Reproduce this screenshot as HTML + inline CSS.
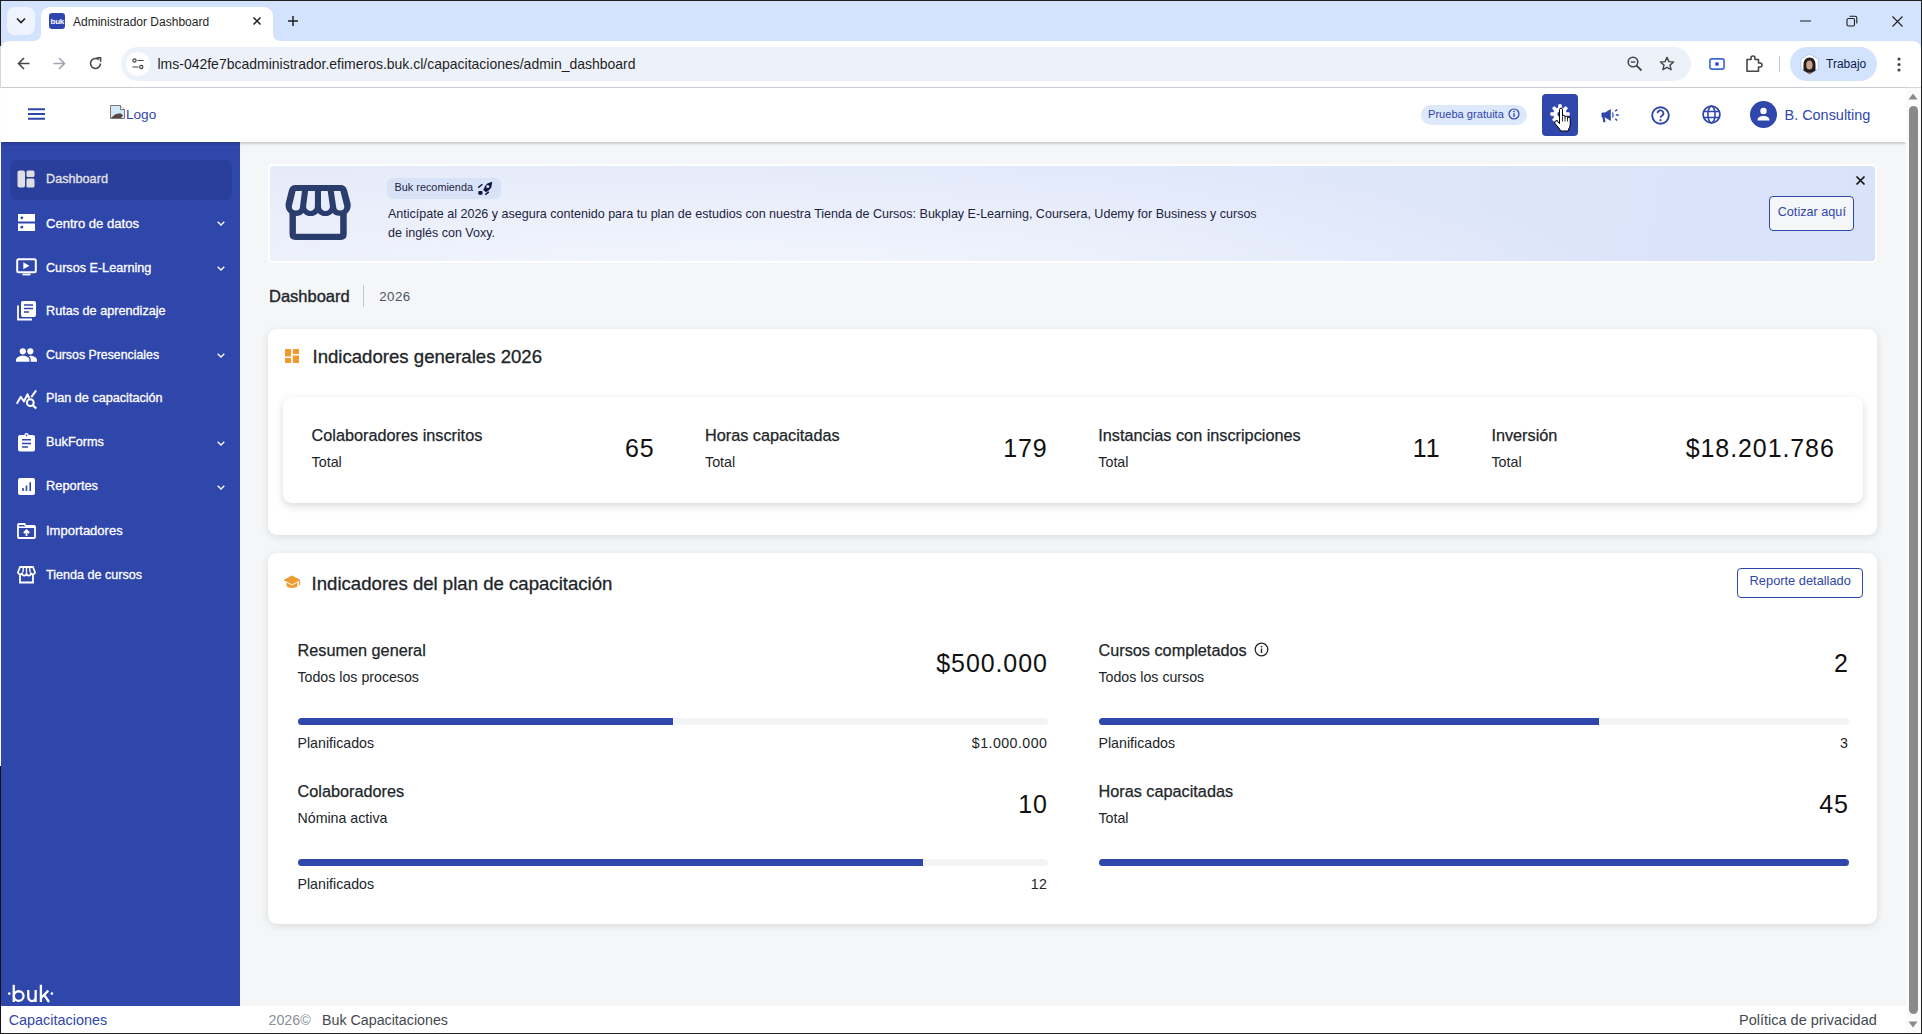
<!DOCTYPE html>
<html><head><meta charset="utf-8">
<style>
*{margin:0;padding:0;box-sizing:border-box}
html,body{width:1922px;height:1034px;overflow:hidden;background:#fff;font-family:"Liberation Sans",sans-serif}
.a{position:absolute}
.t{position:absolute;white-space:nowrap;line-height:1}
svg{position:absolute;overflow:visible}
</style></head><body>
<div class="a" style="left:0px;top:0px;width:1922px;height:50px;background:#d3e3fd;"></div>
<div class="a" style="left:7px;top:7px;width:28px;height:28px;background:#eef3fd;border-radius:8px"></div>
<svg style="left:15px;top:17px" width="12" height="8" viewBox="0 0 12 8"><path d="M2 1.5 L6 5.5 L10 1.5" fill="none" stroke="#1f1f1f" stroke-width="1.6"/></svg>
<div class="a" style="left:41px;top:7px;width:232px;height:35px;background:#fff;border-radius:9px 9px 0 0"></div>
<svg style="left:33px;top:33px" width="8" height="8" viewBox="0 0 8 8"><path d="M0 8 Q8 8 8 0 V8 Z" fill="#fff"/></svg>
<svg style="left:273px;top:33px" width="8" height="8" viewBox="0 0 8 8"><path d="M8 8 Q0 8 0 0 V8 Z" fill="#fff"/></svg>
<div class="a" style="left:49px;top:13px;width:16px;height:16px;background:#2f45b0;border-radius:3px"></div>
<div class="t" style="top:17.73px;font-size:8px;color:#fff;font-weight:bold;letter-spacing:-0.2px;left:50.50px;">buk</div>
<div class="t" style="top:15.84px;font-size:12px;color:#1f1f1f;left:73.00px;">Administrador Dashboard</div>
<svg style="left:253px;top:17px" width="8" height="8" viewBox="0 0 8 8"><path d="M0.5 0.5L7.5 7.5M7.5 0.5L0.5 7.5" stroke="#1f1f1f" stroke-width="1.5"/></svg>
<svg style="left:288px;top:16px" width="10" height="10" viewBox="0 0 10 10"><path d="M5 0V10M0 5H10" stroke="#1f1f1f" stroke-width="1.5"/></svg>
<svg style="left:1800px;top:20px" width="11" height="2" viewBox="0 0 11 2"><path d="M0 1H11" stroke="#1f1f1f" stroke-width="1"/></svg>
<svg style="left:1846px;top:15px" width="12" height="12" viewBox="0 0 12 12"><rect x="1" y="3.5" width="7.5" height="7.5" rx="1.5" fill="none" stroke="#1f1f1f" stroke-width="1.1"/><path d="M3.5 1.2H9A1.8 1.8 0 0 1 10.8 3V8.5" fill="none" stroke="#1f1f1f" stroke-width="1.1"/></svg>
<svg style="left:1892px;top:16px" width="11" height="11" viewBox="0 0 11 11"><path d="M0.5 0.5L10.5 10.5M10.5 0.5L0.5 10.5" stroke="#1f1f1f" stroke-width="1.1"/></svg>
<div class="a" style="left:1px;top:41px;width:1920px;height:46px;background:#fff;border-radius:8px 8px 0 0"></div>
<div class="a" style="left:1px;top:87px;width:1920px;height:1px;background:#d5d8dc;"></div>
<svg style="left:17px;top:57px" width="13" height="13" viewBox="0 0 13 13"><path d="M12.5 6.5H1.5M7 1L1.5 6.5L7 12" fill="none" stroke="#474747" stroke-width="1.6"/></svg>
<svg style="left:53px;top:57px" width="13" height="13" viewBox="0 0 13 13"><path d="M0.5 6.5H11.5M6 1L11.5 6.5L6 12" fill="none" stroke="#a0a4ae" stroke-width="1.6"/></svg>
<svg style="left:89px;top:57px" width="13" height="13" viewBox="0 0 13 13"><path d="M11.5 6.5A5 5 0 1 1 9.8 2.7" fill="none" stroke="#474747" stroke-width="1.6"/><path d="M7.6 0.8H11.6V4.8" fill="none" stroke="#474747" stroke-width="1.6"/></svg>
<div class="a" style="left:121px;top:47px;width:1570px;height:34px;background:#edf2fa;border-radius:17px"></div>
<div class="a" style="left:126px;top:52px;width:24px;height:24px;background:#fff;border-radius:12px"></div>
<svg style="left:132px;top:58px" width="12" height="12" viewBox="0 0 12 12"><circle cx="2.5" cy="2.5" r="1.6" fill="none" stroke="#474747" stroke-width="1.2"/><path d="M5.5 2.5H11.5M0.5 9H6.5" stroke="#474747" stroke-width="1.2"/><circle cx="9.3" cy="9" r="1.6" fill="none" stroke="#474747" stroke-width="1.2"/></svg>
<div class="t" style="top:57.16px;font-size:13.99px;color:#1f1f1f;left:157.50px;">lms-042fe7bcadministrador.efimeros.buk.cl/capacitaciones/admin_dashboard</div>
<svg style="left:1627px;top:56px" width="16" height="16" viewBox="0 0 16 16"><circle cx="6" cy="6" r="4.8" fill="none" stroke="#474747" stroke-width="1.6"/><path d="M3.8 6H8.2" stroke="#474747" stroke-width="1.4"/><path d="M9.6 9.6L14.5 14.5" stroke="#474747" stroke-width="1.8"/></svg>
<svg style="left:1659px;top:56px" width="16" height="16" viewBox="0 0 16 16"><path d="M8 1.3L9.9 5.6L14.6 6L11 9.1L12.1 13.7L8 11.3L3.9 13.7L5 9.1L1.4 6L6.1 5.6Z" fill="none" stroke="#474747" stroke-width="1.4" stroke-linejoin="round"/></svg>
<svg style="left:1709px;top:58px" width="16" height="12" viewBox="0 0 16 12"><rect x="0.9" y="0.9" width="14.2" height="10.2" rx="2" fill="none" stroke="#3a67d8" stroke-width="1.6"/><circle cx="8" cy="6" r="2" fill="#3a56c8"/></svg>
<svg style="left:1745px;top:55px" width="18" height="18" viewBox="0 0 18 18"><path d="M2 4.5H6V3A2 2 0 0 1 10 3V4.5H13.5V8H15A2 2 0 0 1 15 12H13.5V16.2H2Z" fill="none" stroke="#474747" stroke-width="1.6" stroke-linejoin="round"/></svg>
<div class="a" style="left:1779px;top:56px;width:1px;height:16px;background:#c7cdd6;"></div>
<div class="a" style="left:1790px;top:47px;width:87px;height:34px;background:#d3e3fd;border-radius:17px"></div>
<svg style="left:1799px;top:53px" width="21" height="22" viewBox="0 0 21 22"><defs><clipPath id="hx"><path d="M10.6 1L19.3 6V16L10.6 21L1.9 16V6Z"/></clipPath></defs><path d="M10.6 1L19.3 6V16L10.6 21L1.9 16V6Z" fill="#fff" stroke="#8fb3e8" stroke-width="0.6"/><g clip-path="url(#hx)"><path d="M4.5 22V12Q4.5 4.5 10.6 4.5Q16.5 4.5 16.5 12V22Z" fill="#221c1c"/><ellipse cx="10.4" cy="12" rx="3.2" ry="4.6" fill="#caa18c"/><path d="M6 22Q10.6 16.5 15.5 22Z" fill="#b77a6a"/></g></svg>
<div class="t" style="top:58.34px;font-size:12px;color:#0b1d4a;left:1826.00px;">Trabajo</div>
<svg style="left:1897px;top:57px" width="4" height="15" viewBox="0 0 4 15"><circle cx="2" cy="2" r="1.6" fill="#474747"/><circle cx="2" cy="7.5" r="1.6" fill="#474747"/><circle cx="2" cy="13" r="1.6" fill="#474747"/></svg>
<div class="a" style="left:1px;top:142px;width:1905px;height:864px;background:#f5f6f8;"></div>
<div class="a" style="left:1px;top:142px;width:239px;height:864px;background:#2f46ab;"></div>
<div class="a" style="left:10px;top:160px;width:222px;height:40px;background:#2a3f9b;border-radius:8px"></div>
<div class="t" style="top:173.47px;font-size:12.67px;color:#e4e4e7;left:46.00px;-webkit-text-stroke:0.3px #e4e4e7;">Dashboard</div>
<div class="t" style="top:216.64px;font-size:13.07px;color:#fff;left:46.00px;-webkit-text-stroke:0.3px #fff;">Centro de datos</div>
<svg style="left:217px;top:221.4px" width="8" height="5" viewBox="0 0 8 5"><path d="M0.7 0.7L4 4L7.3 0.7" fill="none" stroke="#fff" stroke-width="1.3"/></svg>
<div class="t" style="top:261.51px;font-size:12.63px;color:#fff;left:46.00px;-webkit-text-stroke:0.3px #fff;">Cursos E-Learning</div>
<svg style="left:217px;top:265.9px" width="8" height="5" viewBox="0 0 8 5"><path d="M0.7 0.7L4 4L7.3 0.7" fill="none" stroke="#fff" stroke-width="1.3"/></svg>
<div class="t" style="top:304.98px;font-size:12.66px;color:#fff;left:46.00px;-webkit-text-stroke:0.3px #fff;">Rutas de aprendizaje</div>
<div class="t" style="top:349.05px;font-size:12.34px;color:#fff;left:46.00px;-webkit-text-stroke:0.3px #fff;">Cursos Presenciales</div>
<svg style="left:217px;top:353.2px" width="8" height="5" viewBox="0 0 8 5"><path d="M0.7 0.7L4 4L7.3 0.7" fill="none" stroke="#fff" stroke-width="1.3"/></svg>
<div class="t" style="top:392.49px;font-size:12.65px;color:#fff;left:46.00px;-webkit-text-stroke:0.3px #fff;">Plan de capacitación</div>
<div class="t" style="top:436.44px;font-size:12.71px;color:#fff;left:46.00px;-webkit-text-stroke:0.3px #fff;">BukForms</div>
<svg style="left:217px;top:440.9px" width="8" height="5" viewBox="0 0 8 5"><path d="M0.7 0.7L4 4L7.3 0.7" fill="none" stroke="#fff" stroke-width="1.3"/></svg>
<div class="t" style="top:480.35px;font-size:12.82px;color:#fff;left:46.00px;-webkit-text-stroke:0.3px #fff;">Reportes</div>
<svg style="left:217px;top:484.9px" width="8" height="5" viewBox="0 0 8 5"><path d="M0.7 0.7L4 4L7.3 0.7" fill="none" stroke="#fff" stroke-width="1.3"/></svg>
<div class="t" style="top:524.18px;font-size:13.02px;color:#fff;left:46.00px;-webkit-text-stroke:0.3px #fff;">Importadores</div>
<div class="t" style="top:568.55px;font-size:12.58px;color:#fff;left:46.00px;-webkit-text-stroke:0.3px #fff;">Tienda de cursos</div>
<svg style="left:17px;top:170px" width="18" height="18" viewBox="0 0 18 18"><rect x="0.5" y="0.5" width="7.5" height="17" rx="2" fill="#dedfe3"/><rect x="9.5" y="0.5" width="8" height="6.5" rx="1.5" fill="#dedfe3"/><rect x="9.5" y="8.5" width="8" height="9" rx="1.5" fill="#dedfe3"/></svg>
<svg style="left:18px;top:214px" width="17" height="17" viewBox="0 0 17 17"><rect x="0" y="0" width="17" height="7.5" fill="#fff"/><rect x="0" y="9.5" width="17" height="7.5" fill="#fff"/><circle cx="3.8" cy="3.8" r="1.4" fill="#2f46ab"/><circle cx="3.8" cy="13.2" r="1.4" fill="#2f46ab"/></svg>
<svg style="left:16px;top:258px" width="21" height="18" viewBox="0 0 21 18"><rect x="1.2" y="1.2" width="18.6" height="13" rx="1.5" fill="none" stroke="#fff" stroke-width="2"/><path d="M7.3 4.2V11.2L13.5 7.7Z" fill="#fff"/><rect x="6.5" y="15.6" width="8" height="1.8" fill="#fff"/></svg>
<svg style="left:17px;top:301px" width="20" height="20" viewBox="0 0 20 20"><path d="M1 4.5V18.5H15" fill="none" stroke="#fff" stroke-width="1.8"/><rect x="4" y="0" width="15" height="16" rx="2" fill="#fff"/><path d="M7 4H16M7 7.5H16M7 11H12" stroke="#2f46ab" stroke-width="1.3"/></svg>
<svg style="left:16px;top:348px" width="22" height="14" viewBox="0 0 22 14"><circle cx="6.8" cy="3.3" r="3.1" fill="#fff"/><circle cx="14.3" cy="3.3" r="3.1" fill="#fff"/><path d="M0 13.8V12.3C0 9.3 3.5 7.8 6.8 7.8S13.5 9.3 13.5 12.3V13.8Z" fill="#fff"/><path d="M14.8 13.8V12.3C14.8 10.5 14 9.2 12.8 8.2C13.3 8 13.8 7.8 14.3 7.8C17.5 7.8 21 9.3 21 12.3V13.8Z" fill="#fff"/></svg>
<svg style="left:16px;top:389px" width="22" height="21" viewBox="0 0 22 21"><path d="M0.8 14.7L4.8 7.8L7.9 12.5L11.5 5.2L13.3 9.5" fill="none" stroke="#fff" stroke-width="2" stroke-linejoin="round"/><path d="M15.3 8.2L20.2 1.3" stroke="#fff" stroke-width="2"/><circle cx="14.3" cy="13.7" r="3.4" fill="none" stroke="#fff" stroke-width="2"/><path d="M16.9 16.4L20.3 19.5" stroke="#fff" stroke-width="2.2"/></svg>
<svg style="left:18px;top:433px" width="17" height="19" viewBox="0 0 17 19"><rect x="0" y="2" width="17" height="16.5" rx="2" fill="#fff"/><circle cx="8.5" cy="2.2" r="2.2" fill="#fff"/><circle cx="8.5" cy="2.4" r="0.8" fill="#2f46ab"/><path d="M4 6.8H13M4 10.5H13M4 14H10" stroke="#2f46ab" stroke-width="1.4"/></svg>
<svg style="left:18px;top:478px" width="17" height="17" viewBox="0 0 17 17"><rect x="0" y="0" width="17" height="17" rx="2" fill="#fff"/><path d="M5 10V13M8.5 7.5V13M12.2 4.2V13" stroke="#2f46ab" stroke-width="1.6"/></svg>
<svg style="left:17px;top:523px" width="19" height="16" viewBox="0 0 19 16"><path d="M1 2A1 1 0 0 1 2 1H7.5L9 3H17.5A0.8 0.8 0 0 1 18 3.8V14.5A0.8 0.8 0 0 1 17.2 15H1.8A0.8 0.8 0 0 1 1 14.2Z" fill="none" stroke="#fff" stroke-width="1.8"/><path d="M1 4.2H18" stroke="#fff" stroke-width="1.6"/><path d="M9.5 13V8M6.8 10L9.5 7.3L12.2 10" fill="none" stroke="#fff" stroke-width="1.8"/></svg>
<svg style="left:17px;top:566px" width="19" height="18" viewBox="0 0 19 18"><path d="M3 1H16L18 6.3A2.2 2.2 0 0 1 14 7.3A2.2 2.2 0 0 1 9.5 7.3A2.2 2.2 0 0 1 5 7.3A2.2 2.2 0 0 1 1 6.3Z" fill="none" stroke="#fff" stroke-width="1.8" stroke-linejoin="round"/><path d="M6.5 1L5.8 6.5M9.5 1V6.5M12.5 1L13.2 6.5" stroke="#fff" stroke-width="1.4"/><path d="M3 8.5V16.5H16V8.5" fill="none" stroke="#fff" stroke-width="1.8"/></svg>
<svg style="left:0px;top:975px" width="60" height="35" viewBox="0 0 60 35"><circle cx="9.3" cy="18.6" r="1.3" fill="#fff"/><circle cx="51.9" cy="18.6" r="1.3" fill="#fff"/><g fill="none" stroke="#fff" stroke-width="2.3"><path d="M13.75 9.8V27"/><circle cx="18.7" cy="21.1" r="4.85"/><path d="M28.25 14.9V21.5A3.7 4.6 0 0 0 35.65 21.5V14.9M35.65 14.9V27"/><path d="M40.9 9.8V27M41.5 22.5L48.3 15.6M44.2 19.8L49 27"/></g></svg>
<div class="a" style="left:1px;top:88px;width:1905px;height:54px;background:#fff;box-shadow:0 1px 3px rgba(0,0,0,.28)"></div>
<svg style="left:28px;top:108px" width="17" height="12" viewBox="0 0 17 12"><path d="M0 1.3H17M0 6H17M0 10.7H17" stroke="#2f46ab" stroke-width="2"/></svg>
<svg style="left:110px;top:105px" width="15" height="14" viewBox="0 0 15 14"><path d="M0.5 0.5H10.5L14.5 4.5V13.5H0.5Z" fill="#d4e9f7" stroke="#777" stroke-width="1"/><path d="M1 13L5 9.5Q8 8 11 8.5L13 10.5L11 13Z" fill="#5a4740"/><path d="M10.5 0.5V4.5H14.5" fill="#fff" stroke="#777" stroke-width="1"/></svg>
<div class="t" style="top:108.49px;font-size:13.6px;color:#2f46ab;left:126.00px;">Logo</div>
<div class="a" style="left:1421px;top:105px;width:106px;height:20px;background:#dde8fa;border-radius:10px"></div>
<div class="t" style="top:108.90px;font-size:11.1px;color:#2f46ab;left:1428.00px;">Prueba gratuita</div>
<svg style="left:1508px;top:108px" width="12" height="12" viewBox="0 0 12 12"><circle cx="6" cy="6" r="5" fill="none" stroke="#2f46ab" stroke-width="1.2"/><circle cx="6" cy="3.6" r="0.8" fill="#2f46ab"/><path d="M6 5.3V9" stroke="#2f46ab" stroke-width="1.3"/></svg>
<div class="a" style="left:1542px;top:94px;width:36px;height:42px;background:#2f46ab;border-radius:4px"></div>
<svg style="left:1550px;top:104px" width="20" height="20" viewBox="0 0 20 20"><rect x="8.2" y="0.3" width="3.6" height="4" rx="0.8" fill="#fff" transform="rotate(0 10 10)"/><rect x="8.2" y="0.3" width="3.6" height="4" rx="0.8" fill="#fff" transform="rotate(45 10 10)"/><rect x="8.2" y="0.3" width="3.6" height="4" rx="0.8" fill="#fff" transform="rotate(90 10 10)"/><rect x="8.2" y="0.3" width="3.6" height="4" rx="0.8" fill="#fff" transform="rotate(135 10 10)"/><rect x="8.2" y="0.3" width="3.6" height="4" rx="0.8" fill="#fff" transform="rotate(180 10 10)"/><rect x="8.2" y="0.3" width="3.6" height="4" rx="0.8" fill="#fff" transform="rotate(225 10 10)"/><rect x="8.2" y="0.3" width="3.6" height="4" rx="0.8" fill="#fff" transform="rotate(270 10 10)"/><rect x="8.2" y="0.3" width="3.6" height="4" rx="0.8" fill="#fff" transform="rotate(315 10 10)"/><circle cx="10" cy="10" r="6.8" fill="#fff"/><circle cx="10" cy="10" r="2.6" fill="#2f46ab"/></svg>
<svg style="left:1553.5px;top:107.5px" width="18" height="24" viewBox="0 0 18 24"><path d="M5.5 1.6Q5.5 0.2 7 0.2Q8.5 0.2 8.5 1.6V8.2Q8.5 7.2 9.8 7.2Q11 7.2 11 8.6V9.2Q11 8.2 12.3 8.2Q13.5 8.2 13.5 9.6V10.2Q13.5 9.2 14.8 9.2Q16.2 9.2 16.2 10.7V16.2Q16.2 19.2 14.7 21L14.2 23H6.6L5.6 21L1.1 15.6Q0.2 14.2 1.2 13.2Q2.2 12.3 3.6 13.6L5.5 15.6Z" fill="#fff" stroke="#000" stroke-width="1" stroke-linejoin="round"/><path d="M8.5 8.5V13.5M11 9V13.5M13.5 10V13.5" stroke="#000" stroke-width="0.8"/></svg>
<svg style="left:1601px;top:108px" width="19" height="15" viewBox="0 0 19 15"><path d="M0.5 5.5A1 1 0 0 1 1.5 4.5H4L9.8 1V13L4 9.5H3.7L4.5 14.3H2.3L1.5 9.5A1 1 0 0 1 0.5 8.5Z" fill="#2f46ab"/><path d="M11.6 4.5Q12.6 7 11.6 9.5" fill="none" stroke="#2f46ab" stroke-width="1.2"/><path d="M14.2 3.2L16.2 1.5M14.8 7H17.8M14.2 10.8L16.2 12.5" stroke="#2f46ab" stroke-width="1.5"/></svg>
<svg style="left:1651px;top:106px" width="19" height="19" viewBox="0 0 19 19"><circle cx="9.5" cy="9.5" r="8.3" fill="none" stroke="#2f46ab" stroke-width="1.9"/><path d="M6.6 7.3A2.9 2.9 0 1 1 10.8 9.8C10 10.3 9.5 10.8 9.5 11.8" fill="none" stroke="#2f46ab" stroke-width="1.8"/><circle cx="9.5" cy="14.2" r="1.1" fill="#2f46ab"/></svg>
<svg style="left:1702px;top:105px" width="19" height="19" viewBox="0 0 19 19"><circle cx="9.5" cy="9.5" r="8.4" fill="none" stroke="#2f46ab" stroke-width="1.8"/><ellipse cx="9.5" cy="9.5" rx="3.6" ry="8.4" fill="none" stroke="#2f46ab" stroke-width="1.6"/><path d="M1.3 6.5H17.7M1.3 12.5H17.7" stroke="#2f46ab" stroke-width="1.6"/></svg>
<svg style="left:1750px;top:101px" width="27" height="27" viewBox="0 0 27 27"><circle cx="13.5" cy="13.5" r="13.5" fill="#2f46ab"/><circle cx="13.5" cy="10" r="3.2" fill="#fff"/><path d="M7.5 19.5C7.5 16 10.5 15 13.5 15S19.5 16 19.5 19.5Z" fill="#fff"/></svg>
<div class="t" style="top:107.97px;font-size:14.45px;color:#2f46ab;left:1784.50px;">B. Consulting</div>
<div class="a" style="left:1906px;top:88px;width:15px;height:945px;background:#fbfbfb;"></div>
<svg style="left:1908px;top:93px" width="10" height="7" viewBox="0 0 10 7"><path d="M5 0.5L9.5 6.5H0.5Z" fill="#8a8a8a"/></svg>
<div class="a" style="left:1909px;top:106px;width:9px;height:908px;background:#8a8a8a;border-radius:4.5px"></div>
<svg style="left:1908px;top:1021px" width="10" height="7" viewBox="0 0 10 7"><path d="M5 6.5L9.5 0.5H0.5Z" fill="#8a8a8a"/></svg>
<div class="a" style="left:1px;top:1006px;width:1905px;height:27px;background:#fff;"></div>
<div class="t" style="top:1012.81px;font-size:14.4px;color:#2f46ab;left:8.70px;">Capacitaciones</div>
<div class="t" style="top:1012.74px;font-size:14.25px;color:#8b8f96;left:268.50px;">2026©</div>
<div class="t" style="top:1012.74px;font-size:14.25px;color:#444950;left:322.00px;">Buk Capacitaciones</div>
<div class="t" style="top:1012.93px;font-size:14.5px;color:#444950;right:45.20px;">Política de privacidad</div>
<div class="a" style="left:268px;top:164px;width:1609px;height:99px;background:radial-gradient(ellipse 55% 130% at 30% 115%,rgba(255,255,255,.6),rgba(255,255,255,0)),linear-gradient(100deg,#e6ebfa 0%,#e1e8fa 55%,#d8e2f9 100%);border:2px solid #fff;border-radius:5px"></div>
<svg style="left:280px;top:178px" width="80" height="70" viewBox="0 0 80 70"><path fill-rule="evenodd" fill="#2a3d6c" d="M15.6 7.1L60.5 7.1Q65.5 7.1 67 12L70.6 25.5Q71.5 31.5 67 35.5Q62 38.5 57 37.5Q54.5 37 52.8 34.9Q50 38 45.3 38Q40.6 38 37.9 34.9Q35.2 38 30.5 38Q25.8 38 23.4 34.9Q21 37.5 18.5 37.8Q13 38.5 9.5 35.5Q4.8 31.5 5.6 25.5L9 12Q10.5 7.1 15.6 7.1Z M15.6 12.9L22 12.9L20 28.5A4.1 4.1 0 0 1 11.8 28.5Z M28.1 12.9L34.9 12.9L34.9 28.5A4.4 4.4 0 0 1 26.1 28.5Z M41 12.9L47.7 12.9L49.9 28.5A4.45 4.45 0 0 1 41 28.5Z M53.8 12.9L60.4 12.9L64.3 28.5A4.1 4.1 0 0 1 56.1 28.5Z"/><path fill="#2a3d6c" d="M9.5 33V56Q9.5 61.9 15.5 61.9H60.7Q66.7 61.9 66.7 56V33H60.2V55.8H15.9V33Z"/></svg>
<div class="a" style="left:387px;top:178px;width:114px;height:21px;background:#d9e3f8;border-radius:6px"></div>
<div class="t" style="top:181.62px;font-size:10.85px;color:#1c2340;left:394.60px;">Buk recomienda</div>
<svg style="left:476px;top:180px" width="18" height="18" viewBox="0 0 18 18"><path d="M16.3 1.8L15.3 7.2Q13.5 10.5 10 12.3L7.2 10Q8.5 6 11.3 3.6Z" fill="#0d1440"/><circle cx="11.8" cy="6.6" r="1.5" fill="#dbe3f8"/><path d="M2.2 7.6L6.4 4.3" stroke="#0d1440" stroke-width="1.4"/><rect x="2.3" y="11" width="4.2" height="3.8" rx="1" fill="#0d1440"/><path d="M9.3 14.6L12.8 11.8" stroke="#0d1440" stroke-width="1.5"/></svg>
<div class="t" style="top:208.38px;font-size:12.54px;color:#1c2340;left:388.00px;">Anticípate al 2026 y asegura contenido para tu plan de estudios con nuestra Tienda de Cursos: Bukplay E-Learning, Coursera, Udemy for Business y cursos</div>
<div class="t" style="top:226.98px;font-size:12.54px;color:#1c2340;left:388.00px;">de inglés con Voxy.</div>
<svg style="left:1856px;top:176px" width="9" height="9" viewBox="0 0 9 9"><path d="M0.5 0.5L8.5 8.5M8.5 0.5L0.5 8.5" stroke="#111" stroke-width="1.7"/></svg>
<div class="a" style="left:1769px;top:196px;width:85px;height:35px;background:#f5f6f8;border:1.3px solid #2f46ab;border-radius:4px"></div>
<div class="t" style="top:205.97px;font-size:12.67px;color:#2f46ab;left:1777.70px;">Cotizar aquí</div>
<div class="t" style="top:287.53px;font-size:16.5px;color:#212529;left:269.00px;-webkit-text-stroke:0.35px #212529;">Dashboard</div>
<div class="a" style="left:363px;top:285px;width:1px;height:22px;background:#c4c8cf;"></div>
<div class="t" style="top:289.54px;font-size:13.3px;color:#4b5563;letter-spacing:0.5px;left:379.20px;">2026</div>
<div class="a" style="left:268px;top:329px;width:1609px;height:206px;background:#fff;border-radius:9px;box-shadow:0 2px 9px rgba(0,0,0,.11)"></div>
<svg style="left:285px;top:349px" width="14" height="14" viewBox="0 0 14 14"><rect x="0" y="0" width="6" height="7.5" fill="#f09b30"/><rect x="0" y="9" width="6" height="5" fill="#f09b30"/><rect x="7.8" y="0" width="6.2" height="5" fill="#f09b30"/><rect x="7.8" y="6.5" width="6.2" height="7.5" fill="#f09b30"/></svg>
<div class="t" style="top:347.76px;font-size:18.6px;color:#212529;left:312.50px;-webkit-text-stroke:0.3px #212529;">Indicadores generales 2026</div>
<div class="a" style="left:283px;top:397px;width:1580px;height:106px;background:#fff;border-radius:9px;box-shadow:0 3px 8px rgba(0,0,0,.15)"></div>
<div class="t" style="top:426.74px;font-size:16.25px;color:#212529;left:311.60px;-webkit-text-stroke:0.25px #212529;">Colaboradores inscritos</div>
<div class="t" style="top:454.90px;font-size:14.3px;color:#212529;left:311.60px;">Total</div>
<div class="t" style="top:435.84px;font-size:25px;color:#111;letter-spacing:0.9px;right:1268.40px;margin-right:-0.9px;">65</div>
<div class="t" style="top:426.74px;font-size:16.25px;color:#212529;left:705.00px;-webkit-text-stroke:0.25px #212529;">Horas capacitadas</div>
<div class="t" style="top:454.90px;font-size:14.3px;color:#212529;left:705.00px;">Total</div>
<div class="t" style="top:435.84px;font-size:25px;color:#111;letter-spacing:0.9px;right:875.30px;margin-right:-0.9px;">179</div>
<div class="t" style="top:426.74px;font-size:16.25px;color:#212529;left:1098.30px;-webkit-text-stroke:0.25px #212529;">Instancias con inscripciones</div>
<div class="t" style="top:454.90px;font-size:14.3px;color:#212529;left:1098.30px;">Total</div>
<div class="t" style="top:435.84px;font-size:25px;color:#111;letter-spacing:0.9px;right:482.40px;margin-right:-0.9px;">11</div>
<div class="t" style="top:426.74px;font-size:16.25px;color:#212529;left:1491.40px;-webkit-text-stroke:0.25px #212529;">Inversión</div>
<div class="t" style="top:454.90px;font-size:14.3px;color:#212529;left:1491.40px;">Total</div>
<div class="t" style="top:435.84px;font-size:25px;color:#111;letter-spacing:0.9px;right:88.20px;margin-right:-0.9px;">$18.201.786</div>
<div class="a" style="left:268px;top:553px;width:1609px;height:371px;background:#fff;border-radius:9px;box-shadow:0 2px 9px rgba(0,0,0,.11)"></div>
<svg style="left:283px;top:575px" width="18" height="15" viewBox="0 0 18 15"><path d="M9 0.5L17.5 5L9 9.5L0.5 5Z" fill="#f09b30"/><path d="M3.5 7.5V11C5 13.5 13 13.5 14.5 11V7.5L9 10.5Z" fill="#f09b30"/><path d="M16.5 5.5V10" stroke="#f09b30" stroke-width="1.2"/></svg>
<div class="t" style="top:575.06px;font-size:18.6px;color:#212529;left:311.60px;-webkit-text-stroke:0.3px #212529;">Indicadores del plan de capacitación</div>
<div class="a" style="left:1737px;top:568px;width:126px;height:30px;background:#fff;border:1.3px solid #2f46ab;border-radius:4px"></div>
<div class="t" style="top:575.13px;font-size:12.84px;color:#2f46ab;left:1749.60px;">Reporte detallado</div>
<div class="t" style="top:642.04px;font-size:16.25px;color:#212529;left:297.50px;-webkit-text-stroke:0.25px #212529;">Resumen general</div>
<div class="t" style="top:669.98px;font-size:14.2px;color:#212529;left:297.50px;">Todos los procesos</div>
<div class="t" style="top:651.04px;font-size:25px;color:#111;letter-spacing:0.9px;right:875.10px;margin-right:-0.9px;">$500.000</div>
<div class="a" style="left:297.5px;top:718px;width:750px;height:7px;background:#f3f4f6;border-radius:4px"></div>
<div class="a" style="left:297.5px;top:718px;width:375.0px;height:7px;background:#2f46ab;border-radius:4px 0 0 4px"></div>
<div class="t" style="top:735.58px;font-size:14.2px;color:#212529;left:297.50px;">Planificados</div>
<div class="t" style="top:735.58px;font-size:14.2px;color:#212529;letter-spacing:0.45px;right:875.10px;margin-right:-0.45px;">$1.000.000</div>
<div class="t" style="top:642.04px;font-size:16.25px;color:#212529;left:1098.50px;-webkit-text-stroke:0.25px #212529;">Cursos completados</div>
<div class="t" style="top:669.98px;font-size:14.2px;color:#212529;left:1098.50px;">Todos los cursos</div>
<div class="t" style="top:651.04px;font-size:25px;color:#111;letter-spacing:0.9px;right:74.10px;margin-right:-0.9px;">2</div>
<div class="a" style="left:1098.5px;top:718px;width:750px;height:7px;background:#f3f4f6;border-radius:4px"></div>
<div class="a" style="left:1098.5px;top:718px;width:500.0px;height:7px;background:#2f46ab;border-radius:4px 0 0 4px"></div>
<div class="t" style="top:735.58px;font-size:14.2px;color:#212529;left:1098.50px;">Planificados</div>
<div class="t" style="top:735.58px;font-size:14.2px;color:#212529;letter-spacing:0.45px;right:74.10px;margin-right:-0.45px;">3</div>
<svg style="left:1254px;top:642px" width="15" height="15" viewBox="0 0 15 15"><circle cx="7.5" cy="7.5" r="6.3" fill="none" stroke="#212529" stroke-width="1.3"/><circle cx="7.5" cy="4.6" r="0.9" fill="#212529"/><path d="M7.5 6.5V11" stroke="#212529" stroke-width="1.4"/></svg>
<div class="t" style="top:783.24px;font-size:16.25px;color:#212529;left:297.50px;-webkit-text-stroke:0.25px #212529;">Colaboradores</div>
<div class="t" style="top:811.18px;font-size:14.2px;color:#212529;left:297.50px;">Nómina activa</div>
<div class="t" style="top:792.24px;font-size:25px;color:#111;letter-spacing:0.9px;right:875.10px;margin-right:-0.9px;">10</div>
<div class="a" style="left:297.5px;top:859.2px;width:750px;height:7px;background:#f3f4f6;border-radius:4px"></div>
<div class="a" style="left:297.5px;top:859.2px;width:625.0px;height:7px;background:#2f46ab;border-radius:4px 0 0 4px"></div>
<div class="t" style="top:876.78px;font-size:14.2px;color:#212529;left:297.50px;">Planificados</div>
<div class="t" style="top:876.78px;font-size:14.2px;color:#212529;letter-spacing:0.45px;right:875.10px;margin-right:-0.45px;">12</div>
<div class="t" style="top:783.24px;font-size:16.25px;color:#212529;left:1098.50px;-webkit-text-stroke:0.25px #212529;">Horas capacitadas</div>
<div class="t" style="top:811.18px;font-size:14.2px;color:#212529;left:1098.50px;">Total</div>
<div class="t" style="top:792.24px;font-size:25px;color:#111;letter-spacing:0.9px;right:74.10px;margin-right:-0.9px;">45</div>
<div class="a" style="left:1098.5px;top:859.2px;width:750px;height:7px;background:#f3f4f6;border-radius:4px"></div>
<div class="a" style="left:1098.5px;top:859.2px;width:750.0px;height:7px;background:#2f46ab;border-radius:4px"></div>
<div class="a" style="left:0px;top:0px;width:1922px;height:1px;background:#202020;"></div>
<div class="a" style="left:0px;top:0px;width:1px;height:46px;background:#202020;"></div>
<div class="a" style="left:0px;top:46px;width:1px;height:42px;background:#d6d6d6;"></div>
<div class="a" style="left:0px;top:88px;width:1px;height:678px;background:#fdfdfd;"></div>
<div class="a" style="left:0px;top:766px;width:1px;height:268px;background:#141414;"></div>
<div class="a" style="left:1921px;top:0px;width:1px;height:1034px;background:#202020;"></div>
<div class="a" style="left:0px;top:1033px;width:1922px;height:1px;background:#202020;"></div>
</body></html>
